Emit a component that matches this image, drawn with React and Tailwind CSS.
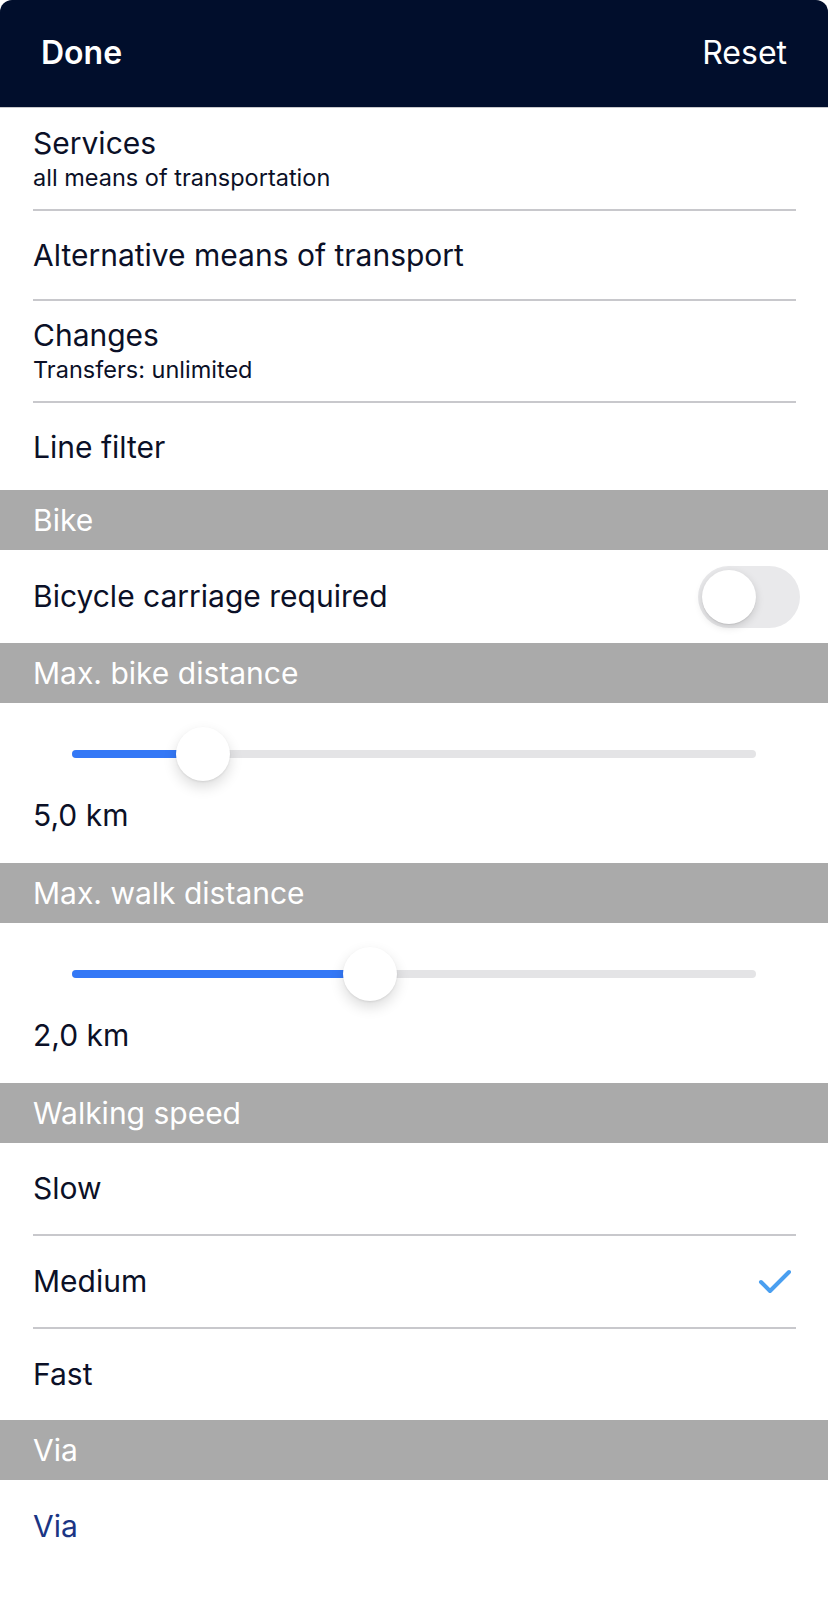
import React, { useState } from "react";

const font = { fontFamily: "Inter, 'Noto Sans', sans-serif" };

const Separator = () => <div className="ml-[33px] mr-[32px] h-[2px] bg-[#c8c8cc]" />;

const SectionHeader = ({ title }) => (
  <div className="h-[60px] bg-[#aaaaaa] flex items-center px-[33px] text-[30px] text-white">
    {title}
  </div>
);

const NavRow = ({ title, subtitle, height }) => (
  <div className={`flex flex-col justify-center px-[33px] ${height}`}>
    <div className="text-[30px] leading-[34px] text-[#0b1027]">{title}</div>
    {subtitle && (
      <div className="mt-[4px] text-[23.5px] leading-[28px] text-[#0b1027]">{subtitle}</div>
    )}
  </div>
);

const Toggle = ({ on, onChange }) => (
  <button
    onClick={() => onChange(!on)}
    className={`relative w-[102px] h-[62px] rounded-full transition-colors ${
      on ? "bg-[#34c759]" : "bg-[#e9e9eb]"
    }`}
  >
    <span
      className={`absolute top-[4px] w-[54px] h-[54px] rounded-full bg-white shadow-[0_3px_8px_rgba(0,0,0,0.15),0_1px_1px_rgba(0,0,0,0.08)] transition-all ${
        on ? "left-[44px]" : "left-[4px]"
      }`}
    />
  </button>
);

const Slider = ({ value, max, label }) => {
  // thumb centre travels from 27px to (width - 27px) of the track
  const pct = value / max;
  return (
    <div className="h-[160px] px-[33px] pt-[24px]">
      <div className="relative mx-[39px] h-[54px]">
        <div className="absolute left-0 right-0 top-[23px] h-[8px] rounded-full bg-[#e4e4e6]" />
        <div
          className="absolute left-0 top-[23px] h-[8px] rounded-l-full bg-[#3478f6]"
          style={{ width: `calc(27px + (100% - 54px) * ${pct})` }}
        />
        <div
          className="absolute top-0 w-[54px] h-[54px] rounded-full bg-white shadow-[0_6px_14px_rgba(0,0,0,0.14),0_1px_2px_rgba(0,0,0,0.08)]"
          style={{ left: `calc((100% - 54px) * ${pct})` }}
        />
      </div>
      <div className="mt-[16px] text-[30px] leading-[36px] text-[#0b1027]">{label}</div>
    </div>
  );
};

const Check = () => (
  <svg width="34" height="26" viewBox="0 0 34 26" fill="none">
    <path
      d="M3 13 L12 22 L31 3"
      stroke="#4a9ff0"
      strokeWidth="4"
      strokeLinecap="round"
      strokeLinejoin="round"
    />
  </svg>
);

export default function App() {
  const [bikeCarriage, setBikeCarriage] = useState(false);
  const [speed, setSpeed] = useState("Medium");

  return (
    <div className="w-[828px] h-[1606px] bg-white overflow-hidden" style={font}>
      {/* Top bar */}
      <div className="h-[108px] bg-[#010e2c] rounded-t-[12px] flex items-center justify-between px-[41px] pb-[2px] border-b border-[#c8c8cc]">
        <button className="text-[32px] font-semibold text-white">Done</button>
        <button className="text-[32px] text-white">Reset</button>
      </div>

      <NavRow title="Services" subtitle="all means of transportation" height="h-[101px]" />
      <Separator />
      <NavRow title="Alternative means of transport" height="h-[88px]" />
      <Separator />
      <NavRow title="Changes" subtitle="Transfers: unlimited" height="h-[100px]" />
      <Separator />
      <NavRow title="Line filter" height="h-[87px]" />

      <SectionHeader title="Bike" />
      <div className="h-[93px] flex items-center justify-between pl-[33px] pr-[28px]">
        <span className="text-[30px] text-[#0b1027]">Bicycle carriage required</span>
        <Toggle on={bikeCarriage} onChange={setBikeCarriage} />
      </div>

      <SectionHeader title="Max. bike distance" />
      <Slider value={0.165} max={1} label="5,0 km" />

      <SectionHeader title="Max. walk distance" />
      <Slider value={0.43} max={1} label="2,0 km" />

      <SectionHeader title="Walking speed" />
      {["Slow", "Medium", "Fast"].map((s, i) => (
        <div key={s}>
          {i > 0 && <Separator />}
          <div
            onClick={() => setSpeed(s)}
            className="h-[91px] flex items-center justify-between pl-[33px] pr-[36px] cursor-pointer"
          >
            <span className="text-[30px] text-[#0b1027]">{s}</span>
            {speed === s && <Check />}
          </div>
        </div>
      ))}

      <SectionHeader title="Via" />
      <div className="h-[92px] flex items-center px-[33px]">
        <span className="text-[30px] text-[#1b3584]">Via</span>
      </div>
    </div>
  );
}
